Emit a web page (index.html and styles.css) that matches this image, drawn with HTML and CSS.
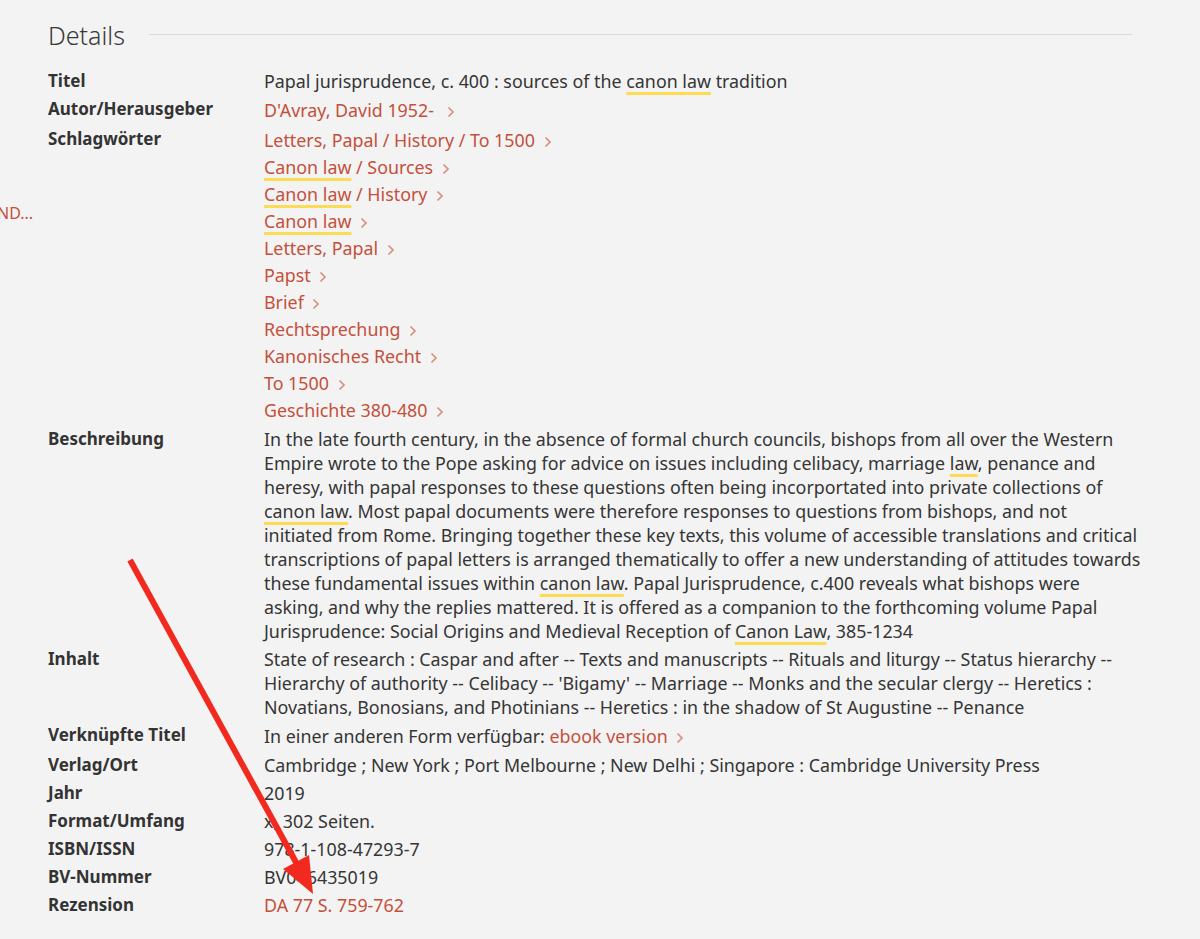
FILE: index.html
```html
<!DOCTYPE html>
<html lang="de">
<head>
<meta charset="utf-8">
<title>Details</title>
<link rel="stylesheet" href="styles.css">
</head>
<body>
<div class="page">
  <aside class="side"><a class="side-link" href="#">ND...</a></aside>
  <main class="main">
    <h2 class="section-title"><span>Details</span></h2>
    <dl class="details">
      <dt>Titel</dt>
      <dd>Papal jurisprudence, c. 400 : sources of the <mark class="hl">canon law</mark> tradition</dd>

      <dt>Autor/Herausgeber</dt>
      <dd class="links"><a class="lnk" href="#">D'Avray, David 1952-&nbsp; <svg class="chev" viewBox="0 0 8 12"><path d="M1.5 1.5 6 6l-4.5 4.5"/></svg></a></dd>

      <dt>Schlagwörter</dt>
      <dd class="links">
        <a class="lnk" href="#">Letters, Papal / History / To 1500 <svg class="chev" viewBox="0 0 8 12"><path d="M1.5 1.5 6 6l-4.5 4.5"/></svg></a>
        <a class="lnk" href="#"><mark class="hl">Canon law</mark> / Sources <svg class="chev" viewBox="0 0 8 12"><path d="M1.5 1.5 6 6l-4.5 4.5"/></svg></a>
        <a class="lnk" href="#"><mark class="hl">Canon law</mark> / History <svg class="chev" viewBox="0 0 8 12"><path d="M1.5 1.5 6 6l-4.5 4.5"/></svg></a>
        <a class="lnk" href="#"><mark class="hl">Canon law</mark> <svg class="chev" viewBox="0 0 8 12"><path d="M1.5 1.5 6 6l-4.5 4.5"/></svg></a>
        <a class="lnk" href="#">Letters, Papal <svg class="chev" viewBox="0 0 8 12"><path d="M1.5 1.5 6 6l-4.5 4.5"/></svg></a>
        <a class="lnk" href="#">Papst <svg class="chev" viewBox="0 0 8 12"><path d="M1.5 1.5 6 6l-4.5 4.5"/></svg></a>
        <a class="lnk" href="#">Brief <svg class="chev" viewBox="0 0 8 12"><path d="M1.5 1.5 6 6l-4.5 4.5"/></svg></a>
        <a class="lnk" href="#">Rechtsprechung <svg class="chev" viewBox="0 0 8 12"><path d="M1.5 1.5 6 6l-4.5 4.5"/></svg></a>
        <a class="lnk" href="#">Kanonisches Recht <svg class="chev" viewBox="0 0 8 12"><path d="M1.5 1.5 6 6l-4.5 4.5"/></svg></a>
        <a class="lnk" href="#">To 1500 <svg class="chev" viewBox="0 0 8 12"><path d="M1.5 1.5 6 6l-4.5 4.5"/></svg></a>
        <a class="lnk" href="#">Geschichte 380-480 <svg class="chev" viewBox="0 0 8 12"><path d="M1.5 1.5 6 6l-4.5 4.5"/></svg></a>
      </dd>

      <dt>Beschreibung</dt>
      <dd class="prose">In the late fourth century, in the absence of formal church councils, bishops from all over the Western<br>
Empire wrote to the Pope asking for advice on issues including celibacy, marriage <mark class="hl">law</mark>, penance and<br>
heresy, with papal responses to these questions often being incorportated into private collections of<br>
<mark class="hl">canon law</mark>. Most papal documents were therefore responses to questions from bishops, and not<br>
initiated from Rome. Bringing together these key texts, this volume of accessible translations and critical<br>
transcriptions of papal letters is arranged thematically to offer a new understanding of attitudes towards<br>
these fundamental issues within <mark class="hl">canon law</mark>. Papal Jurisprudence, c.400 reveals what bishops were<br>
asking, and why the replies mattered. It is offered as a companion to the forthcoming volume Papal<br>
Jurisprudence: Social Origins and Medieval Reception of <mark class="hl">Canon Law</mark>, 385-1234</dd>

      <dt>Inhalt</dt>
      <dd class="prose">State of research : Caspar and after -- Texts and manuscripts -- Rituals and liturgy -- Status hierarchy --<br>
Hierarchy of authority -- Celibacy -- 'Bigamy' -- Marriage -- Monks and the secular clergy -- Heretics :<br>
Novatians, Bonosians, and Photinians -- Heretics : in the shadow of St Augustine -- Penance</dd>

      <dt>Verknüpfte Titel</dt>
      <dd class="links"><span class="lnk-line">In einer anderen Form verfügbar: <a class="lnk" href="#">ebook version <svg class="chev" viewBox="0 0 8 12"><path d="M1.5 1.5 6 6l-4.5 4.5"/></svg></a></span></dd>

      <dt>Verlag/Ort</dt>
      <dd>Cambridge ; New York ; Port Melbourne ; New Delhi ; Singapore : Cambridge University Press</dd>

      <dt>Jahr</dt>
      <dd>2019</dd>

      <dt>Format/Umfang</dt>
      <dd>x, 302 Seiten.</dd>

      <dt>ISBN/ISSN</dt>
      <dd>978-1-108-47293-7</dd>

      <dt>BV-Nummer</dt>
      <dd>BV046435019</dd>

      <dt>Rezension</dt>
      <dd><a class="lnk plain" href="#">DA 77 S. 759-762</a></dd>
    </dl>
  </main>

  <svg class="pointer" viewBox="0 0 1200 939" aria-hidden="true">
    <line x1="130" y1="560" x2="298" y2="866" />
    <polygon points="313,894 283,869 309,855" />
  </svg>
</div>
</body>
</html>
```

FILE: styles.css
```css
html, body {
  margin: 0;
  padding: 0;
}

body {
  background: #f3f3f3;
  color: #353535;
  font-family: "Noto Sans", "Open Sans", "Liberation Sans", sans-serif;
  font-size: 17.85px;
  line-height: 24px;
}

.page {
  position: relative;
  display: flex;
  min-height: 939px;
  overflow: hidden;
}

/* sidebar that continues off the left edge */
.side {
  width: 40px;
  flex: none;
  overflow: hidden;
  padding-top: 201px;
}

.side-link {
  display: block;
  color: #c4503b;
  text-decoration: none;
  font-size: 16px;
  white-space: nowrap;
  margin-left: -3px;
}

.main {
  flex: 1;
  padding: 18px 68px 0 8px;
}

.section-title {
  display: flex;
  align-items: center;
  gap: 24px;
  margin: 0 0 17px;
  font-size: 25px;
  line-height: 34px;
  font-weight: 300;
  color: #393939;
}

.section-title::after {
  content: "";
  flex: 1;
  height: 1px;
  background: #d9d9d9;
  margin-top: -2px;
}

.details {
  display: grid;
  grid-template-columns: 216px 1fr;
  row-gap: 4px;
  margin: 0;
}

.details dt {
  font-size: 17px;
  font-weight: 700;
  color: #333;
}

.details dd {
  margin: 0;
}

/* long paragraphs may run slightly past the column edge */
.details .prose {
  margin-right: -24px;
}

.links {
  display: flex;
  flex-direction: column;
  align-items: flex-start;
  gap: 1px;
}

.lnk-line,
.links > .lnk {
  line-height: 26px;
}

.lnk {
  color: #c4503b;
  text-decoration: none;
}

.chev {
  width: 8px;
  height: 12px;
  margin-left: 4px;
  vertical-align: -1px;
  fill: none;
  stroke: #d5907e;
  stroke-width: 1.7;
}

.hl {
  background: none;
  color: inherit;
  text-decoration: underline;
  text-decoration-color: #fcdb55;
  text-decoration-thickness: 3px;
  text-underline-offset: 4px;
  text-decoration-skip-ink: none;
}

/* red annotation arrow drawn over the list */
.pointer {
  position: absolute;
  left: 0;
  top: 0;
  width: 1200px;
  height: 939px;
  pointer-events: none;
}

.pointer line {
  stroke: #f2291f;
  stroke-width: 6;
}

.pointer polygon {
  fill: #f2291f;
}
```
